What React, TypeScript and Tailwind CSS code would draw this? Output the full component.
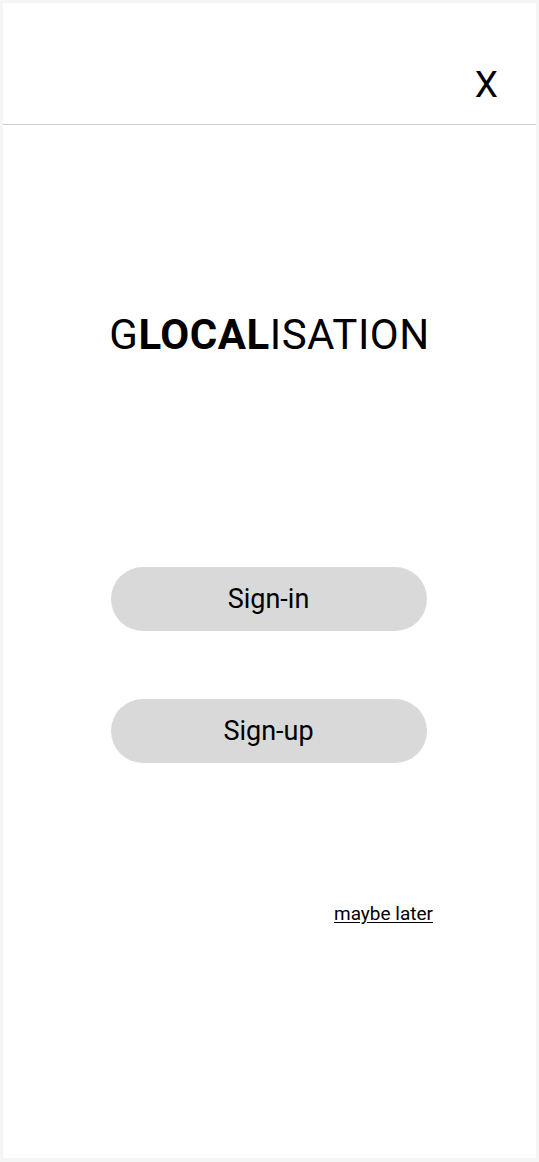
export default function App() {
  return (
    <div className="h-[1162px] w-full bg-[#f5f5f5] pt-[3px] pb-[4px] pl-[3px] pr-[3px] font-['Roboto',sans-serif] text-black">
      <div className="flex h-full flex-col bg-white">
        <header className="flex h-[122px] justify-end border-b border-[#cccccc] pt-[63px] pr-[38px]">
          <button type="button" className="h-[36px] text-[37px] leading-none font-normal">
            X
          </button>
        </header>

        <h1 className="mt-[189px] text-center text-[42px] leading-none font-normal tracking-[0.5px]">
          G<span className="font-bold">LOCAL</span>ISATION
        </h1>

        <div className="mt-[211px] flex flex-col items-center gap-[68px] pr-[2px]">
          <button
            type="button"
            className="h-[64px] w-[316px] rounded-full bg-[#d9d9d9] text-[27px]"
          >
            Sign-in
          </button>
          <button
            type="button"
            className="h-[64px] w-[316px] rounded-full bg-[#d9d9d9] text-[27px]"
          >
            Sign-up
          </button>
        </div>

        <div className="mt-[141px] flex justify-end pr-[103px]">
          <a href="#" className="text-[19px] leading-none underline underline-offset-2">
            maybe later
          </a>
        </div>
      </div>
    </div>
  );
}
